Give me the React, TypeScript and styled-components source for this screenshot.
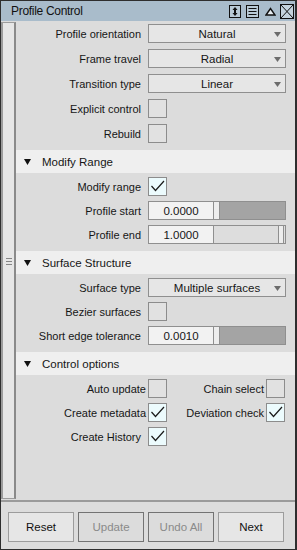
import React from 'react';
import styled, { createGlobalStyle } from 'styled-components';

const GlobalStyle = createGlobalStyle`
  html, body {
    margin: 0;
    padding: 0;
    background: #dcdcdc;
  }
  body {
    font-family: "Liberation Sans", Arial, sans-serif;
    font-size: 11px;
    color: #161616;
  }
  * {
    box-sizing: border-box;
  }
`;

const Window = styled.div`
  width: 297px;
  height: 550px;
  display: flex;
  flex-direction: column;
  border: 1px solid #2e2e2e;
  border-right-width: 2px;
  background: #dcdcdc;
  overflow: hidden;
`;

const TitleBar = styled.div`
  flex: none;
  height: 20px;
  display: flex;
  align-items: center;
  padding: 0 1px 0 10px;
  background: #a9bccb;
  font-size: 12px;
  letter-spacing: -0.3px;
  color: #111;
`;

const Title = styled.span`
  flex: 1;
`;

const TitleIcon = styled.span<{ $ml: number }>`
  display: flex;
  margin-left: ${(p) => p.$ml}px;
`;

const Body = styled.div`
  flex: 1;
  display: flex;
  min-height: 0;
`;

const SideStrip = styled.div`
  flex: none;
  width: 15px;
  margin: 1px 0;
  border-left: 2px solid #9c9c9c;
  border-right: 2px solid #8a8a8a;
  border-top: 1px solid #9c9c9c;
  border-bottom: 1px solid #9c9c9c;
  background: #e6e6e6;
  display: flex;
  align-items: center;
  justify-content: center;
`;

const Grip = styled.span`
  display: flex;
  flex-direction: column;
  gap: 2px;
  margin-top: 1px;

  & > i {
    display: block;
    width: 6px;
    height: 1px;
    background: #858585;
  }
`;

const Content = styled.div`
  flex: 1;
  display: flex;
  flex-direction: column;
`;

const Block = styled.div<{ $top: number; $gap: number }>`
  display: flex;
  flex-direction: column;
  gap: ${(p) => p.$gap}px;
  padding: ${(p) => p.$top}px 0 7px 1px;
`;

const SectionHeader = styled.div`
  height: 23px;
  display: flex;
  align-items: center;
  gap: 11px;
  padding-left: 8px;
  background: #efefef;
  font-size: 11.5px;
`;

const Row = styled.div`
  height: 19px;
  display: grid;
  grid-template-columns: 124px 138px;
  column-gap: 7px;
  align-items: center;
`;

const Label = styled.span`
  text-align: right;
  white-space: nowrap;
`;

const PairRow = styled.div`
  height: 19px;
  display: grid;
  grid-template-columns: 150px 118px;
`;

const Pair = styled.div`
  display: flex;
  align-items: center;
  justify-content: flex-end;
  gap: 2px;
  white-space: nowrap;
`;

const Select = styled.div`
  position: relative;
  height: 19px;
  border: 1px solid #8f8f8f;
  background: #e6e6e6;
  display: flex;
  align-items: center;
  justify-content: center;
  font-size: 11.5px;
`;

const Caret = styled.svg`
  position: absolute;
  right: 4px;
  top: 7px;
`;

const Box = styled.span<{ $on?: boolean }>`
  width: 19px;
  height: 19px;
  border: 1px solid #8c8c8c;
  background: ${(p) => (p.$on ? '#ecfbfd' : '#e1e1e1')};
  display: flex;
  align-items: center;
  justify-content: center;
`;

const FieldGroup = styled.div`
  height: 19px;
  display: flex;
`;

const NumBox = styled.div`
  width: 66px;
  border: 1px solid #8f8f8f;
  background: #f2f2f2;
  display: flex;
  align-items: center;
  justify-content: center;
  font-size: 11.5px;
`;

const Track = styled.div<{ $end?: boolean }>`
  flex: 1;
  display: flex;
  flex-direction: ${(p) => (p.$end ? 'row-reverse' : 'row')};
  border: 1px solid #8f8f8f;
  border-left: none;
  background: ${(p) => (p.$end ? '#dddddd' : '#a4a4a4')};
`;

const Thumb = styled.span<{ $end?: boolean }>`
  width: 6px;
  background: #ededed;
  ${(p) => (p.$end ? 'border-left: 1px solid #8f8f8f; margin-right: 1px; border-right: 1px solid #8f8f8f;' : 'border-right: 1px solid #8f8f8f;')}
`;

const Footer = styled.div`
  flex: none;
  border-top: 2px solid #9a9a9a;
  padding: 10px 0 7px 7px;
  display: grid;
  grid-template-columns: repeat(4, 66px);
  column-gap: 4px;
`;

const Button = styled.button<{ $disabled?: boolean }>`
  height: 30px;
  padding: 0;
  font-family: inherit;
  font-size: 11.5px;
  border: 1px solid ${(p) => (p.$disabled ? '#737373' : '#9c9c9c')};
  background: ${(p) => (p.$disabled ? '#dcdcdc' : '#e6e6e6')};
  color: ${(p) => (p.$disabled ? '#8a8a8a' : '#111')};
`;

const Check = () => (
  <svg width="17" height="17" viewBox="0 0 17 17">
    <polyline points="2.5,8 6.5,12.5 15,3" fill="none" stroke="#1a1a1a" strokeWidth="1.2" />
  </svg>
);

const Dropdown: React.FC<{ value: string }> = ({ value }) => (
  <Select>
    {value}
    <Caret width="7" height="5" viewBox="0 0 7 5">
      <polygon points="0,0 7,0 3.5,5" fill="#6c6c6c" />
    </Caret>
  </Select>
);

const Slider: React.FC<{ value: string; end?: boolean }> = ({ value, end }) => (
  <FieldGroup>
    <NumBox>{value}</NumBox>
    <Track $end={end}>
      <Thumb $end={end} />
    </Track>
  </FieldGroup>
);

const Header: React.FC<{ title: string }> = ({ title }) => (
  <SectionHeader>
    <svg width="7" height="6" viewBox="0 0 7 6">
      <polygon points="0,0 7,0 3.5,6" fill="#111" />
    </svg>
    {title}
  </SectionHeader>
);

const Field: React.FC<{ label: string; children: React.ReactNode }> = ({ label, children }) => (
  <Row>
    <Label>{label}</Label>
    {children}
  </Row>
);

const App: React.FC = () => (
  <>
    <GlobalStyle />
    <Window>
      <TitleBar>
        <Title>Profile Control</Title>
        <TitleIcon $ml={0}>
          <svg width="12" height="13" viewBox="0 0 12 13">
            <rect x="0.5" y="0.5" width="11" height="12" fill="#b9cad6" stroke="#111" />
            <polygon points="6,2 8.5,5 3.5,5" fill="#111" />
            <polygon points="6,11 8.5,8 3.5,8" fill="#111" />
            <rect x="5" y="4" width="2" height="5" fill="#111" />
          </svg>
        </TitleIcon>
        <TitleIcon $ml={5}>
          <svg width="13" height="13" viewBox="0 0 13 13">
            <rect x="0.5" y="0.5" width="12" height="12" fill="#b9cad6" stroke="#111" />
            <line x1="2.5" y1="3.5" x2="10.5" y2="3.5" stroke="#111" />
            <line x1="2.5" y1="6.5" x2="10.5" y2="6.5" stroke="#111" />
            <line x1="2.5" y1="9.5" x2="10.5" y2="9.5" stroke="#111" />
          </svg>
        </TitleIcon>
        <TitleIcon $ml={6}>
          <svg width="11" height="9" viewBox="0 0 11 9">
            <polygon points="1,8 5.5,1.5 10,8" fill="#e8eef2" stroke="#111" strokeWidth="1.4" strokeLinejoin="miter" />
          </svg>
        </TitleIcon>
        <TitleIcon $ml={4}>
          <svg width="14" height="15" viewBox="0 0 14 15">
            <rect x="0.5" y="0.5" width="13" height="14" fill="#c4d3dd" stroke="#111" />
            <line x1="1" y1="1" x2="13" y2="14" stroke="#111" />
            <line x1="13" y1="1" x2="1" y2="14" stroke="#111" />
          </svg>
        </TitleIcon>
      </TitleBar>

      <Body>
        <SideStrip>
          <Grip>
            <i />
            <i />
            <i />
          </Grip>
        </SideStrip>
        <Content>
          <Block $top={3} $gap={6}>
            <Field label="Profile orientation">
              <Dropdown value="Natural" />
            </Field>
            <Field label="Frame travel">
              <Dropdown value="Radial" />
            </Field>
            <Field label="Transition type">
              <Dropdown value="Linear" />
            </Field>
            <Field label="Explicit control">
              <Box />
            </Field>
            <Field label="Rebuild">
              <Box />
            </Field>
          </Block>

          <Header title="Modify Range" />
          <Block $top={4} $gap={5}>
            <Field label="Modify range">
              <Box $on>
                <Check />
              </Box>
            </Field>
            <Field label="Profile start">
              <Slider value="0.0000" />
            </Field>
            <Field label="Profile end">
              <Slider value="1.0000" end />
            </Field>
          </Block>

          <Header title="Surface Structure" />
          <Block $top={4} $gap={5}>
            <Field label="Surface type">
              <Dropdown value="Multiple surfaces" />
            </Field>
            <Field label="Bezier surfaces">
              <Box />
            </Field>
            <Field label="Short edge tolerance">
              <Slider value="0.0010" />
            </Field>
          </Block>

          <Header title="Control options" />
          <Block $top={4} $gap={5}>
            <PairRow>
              <Pair>
                Auto update
                <Box />
              </Pair>
              <Pair>
                Chain select
                <Box />
              </Pair>
            </PairRow>
            <PairRow>
              <Pair>
                Create metadata
                <Box $on>
                  <Check />
                </Box>
              </Pair>
              <Pair>
                Deviation check
                <Box $on>
                  <Check />
                </Box>
              </Pair>
            </PairRow>
            <Field label="Create History">
              <Box $on>
                <Check />
              </Box>
            </Field>
          </Block>
        </Content>
      </Body>

      <Footer>
        <Button>Reset</Button>
        <Button $disabled>Update</Button>
        <Button $disabled>Undo All</Button>
        <Button>Next</Button>
      </Footer>
    </Window>
  </>
);

export default App;
